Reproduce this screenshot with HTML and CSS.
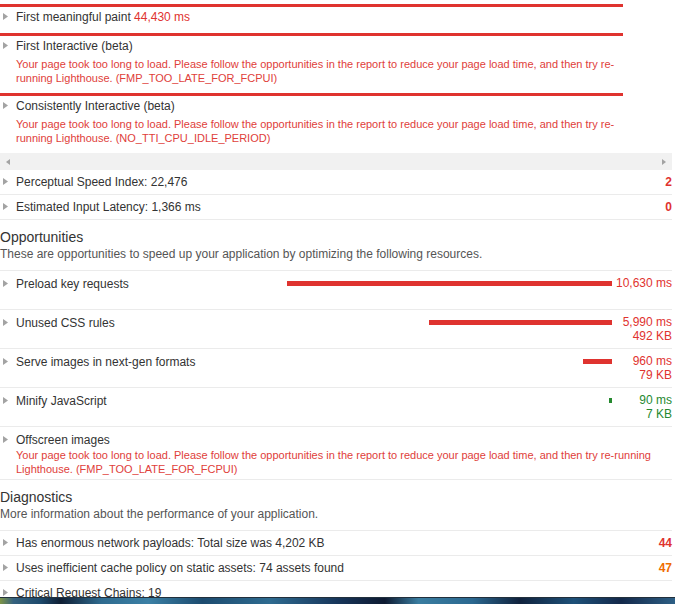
FILE: index.html
```html
<!DOCTYPE html>
<html lang="en">
<head>
<meta charset="utf-8">
<title>Lighthouse report</title>
<link rel="stylesheet" href="styles.css">
</head>
<body>
<div class="report">
  <div class="metrics">
    <div class="metric">
      <div class="title"><span class="tri"><svg width="5" height="7" viewBox="0 0 5 7"><polygon points="0,0 5,3.5 0,7" fill="#a3a3a3"/></svg></span>First meaningful paint&nbsp;<span class="red">44,430 ms</span></div>
    </div>
    <div class="metric">
      <div class="title"><span class="tri"><svg width="5" height="7" viewBox="0 0 5 7"><polygon points="0,0 5,3.5 0,7" fill="#a3a3a3"/></svg></span>First Interactive (beta)</div>
      <div class="desc">Your page took too long to load. Please follow the opportunities in the report to reduce your page load time, and then try re-running Lighthouse. (FMP_TOO_LATE_FOR_FCPUI)</div>
    </div>
    <div class="metric">
      <div class="title"><span class="tri"><svg width="5" height="7" viewBox="0 0 5 7"><polygon points="0,0 5,3.5 0,7" fill="#a3a3a3"/></svg></span>Consistently Interactive (beta)</div>
      <div class="desc">Your page took too long to load. Please follow the opportunities in the report to reduce your page load time, and then try re-running Lighthouse. (NO_TTI_CPU_IDLE_PERIOD)</div>
    </div>
  </div>

  <div class="hscroll">
    <svg width="4" height="6" viewBox="0 0 4 6"><polygon points="4,0 0,3 4,6" fill="#a3a3a3"/></svg>
    <svg width="4" height="6" viewBox="0 0 4 6"><polygon points="0,0 4,3 0,6" fill="#a3a3a3"/></svg>
  </div>

  <div class="audit">
    <div class="title"><span class="tri"><svg width="5" height="7" viewBox="0 0 5 7"><polygon points="0,0 5,3.5 0,7" fill="#a3a3a3"/></svg></span>Perceptual Speed Index: 22,476</div>
    <div class="score red">2</div>
  </div>
  <div class="audit">
    <div class="title"><span class="tri"><svg width="5" height="7" viewBox="0 0 5 7"><polygon points="0,0 5,3.5 0,7" fill="#a3a3a3"/></svg></span>Estimated Input Latency: 1,366 ms</div>
    <div class="score red">0</div>
  </div>

  <div class="group-head">
    <h2>Opportunities</h2>
    <p>These are opportunities to speed up your application by optimizing the following resources.</p>
  </div>

  <div class="opp">
    <div class="title"><span class="tri"><svg width="5" height="7" viewBox="0 0 5 7"><polygon points="0,0 5,3.5 0,7" fill="#a3a3a3"/></svg></span>Preload key requests</div>
    <div class="bar-area"><div class="bar red-bg" style="width:325px"></div></div>
    <div class="vals red"><div>10,630 ms</div></div>
  </div>
  <div class="opp">
    <div class="title"><span class="tri"><svg width="5" height="7" viewBox="0 0 5 7"><polygon points="0,0 5,3.5 0,7" fill="#a3a3a3"/></svg></span>Unused CSS rules</div>
    <div class="bar-area"><div class="bar red-bg" style="width:183px"></div></div>
    <div class="vals red"><div>5,990 ms</div><div>492 KB</div></div>
  </div>
  <div class="opp">
    <div class="title"><span class="tri"><svg width="5" height="7" viewBox="0 0 5 7"><polygon points="0,0 5,3.5 0,7" fill="#a3a3a3"/></svg></span>Serve images in next-gen formats</div>
    <div class="bar-area"><div class="bar red-bg" style="width:29px"></div></div>
    <div class="vals red"><div>960 ms</div><div>79 KB</div></div>
  </div>
  <div class="opp">
    <div class="title"><span class="tri"><svg width="5" height="7" viewBox="0 0 5 7"><polygon points="0,0 5,3.5 0,7" fill="#a3a3a3"/></svg></span>Minify JavaScript</div>
    <div class="bar-area"><div class="bar green-bg" style="width:3px"></div></div>
    <div class="vals green"><div>90 ms</div><div>7 KB</div></div>
  </div>
  <div class="opp opp-error">
    <div class="opp-main">
      <div class="title"><span class="tri"><svg width="5" height="7" viewBox="0 0 5 7"><polygon points="0,0 5,3.5 0,7" fill="#a3a3a3"/></svg></span>Offscreen images</div>
      <div class="desc">Your page took too long to load. Please follow the opportunities in the report to reduce your page load time, and then try re-running Lighthouse. (FMP_TOO_LATE_FOR_FCPUI)</div>
    </div>
  </div>

  <div class="group-head">
    <h2>Diagnostics</h2>
    <p>More information about the performance of your application.</p>
  </div>

  <div class="audit">
    <div class="title"><span class="tri"><svg width="5" height="7" viewBox="0 0 5 7"><polygon points="0,0 5,3.5 0,7" fill="#a3a3a3"/></svg></span>Has enormous network payloads: Total size was 4,202 KB</div>
    <div class="score red">44</div>
  </div>
  <div class="audit">
    <div class="title"><span class="tri"><svg width="5" height="7" viewBox="0 0 5 7"><polygon points="0,0 5,3.5 0,7" fill="#a3a3a3"/></svg></span>Uses inefficient cache policy on static assets: 74 assets found</div>
    <div class="score orange">47</div>
  </div>
  <div class="audit">
    <div class="title"><span class="tri"><svg width="5" height="7" viewBox="0 0 5 7"><polygon points="0,0 5,3.5 0,7" fill="#a3a3a3"/></svg></span>Critical Request Chains: 19</div>
  </div>
</div>
<div class="taskbar"></div>
</body>
</html>
```

FILE: styles.css
```css
html, body {
  margin: 0;
  padding: 0;
  background: #fff;
  overflow: hidden;
}
body {
  font-family: "Liberation Sans", Arial, sans-serif;
  font-size: 12px;
  color: #333;
  line-height: 16px;
}
.report {
  width: 672px;
  padding-top: 4px;
}
.red { color: #df332f; }
.green { color: #26892f; }
.orange { color: #ef6c00; }
.red-bg { background: #df332f; }
.green-bg { background: #26892f; }

.title {
  display: flex;
  align-items: center;
  line-height: 16px;
  white-space: nowrap;
}
.tri {
  width: 16px;
  flex: 0 0 16px;
  display: flex;
  align-items: center;
  padding-left: 3px;
  box-sizing: border-box;
  margin-top: -1px;
}
.tri svg { display: block; }

.metrics { width: 623px; }
.metric {
  border-top: 3px solid #df332f;
  padding: 2px 0 8px;
}
.desc {
  color: #e0403a;
  font-size: 11px;
  line-height: 14px;
  padding-left: 16px;
}
.metric .desc { margin-top: 3px; }

.hscroll {
  height: 17px;
  background: #f1f1f1;
  display: flex;
  align-items: center;
  justify-content: space-between;
  padding: 0 6px;
}
.hscroll svg { display: block; }

.audit {
  display: flex;
  align-items: center;
  padding: 4px 0;
  border-bottom: 1px solid #ebebeb;
}
.audit .title { flex: 1; }
.score {
  font-weight: bold;
  text-align: right;
}

.group-head {
  padding: 8px 0;
  border-bottom: 1px solid #ebebeb;
}
.group-head h2 {
  margin: 0;
  font-size: 14px;
  font-weight: normal;
  line-height: 18px;
  color: #333;
}
.group-head p {
  margin: 0;
  color: #555;
  line-height: 16px;
}

.opp {
  display: flex;
  align-items: flex-start;
  padding: 5px 0;
  border-bottom: 1px solid #ebebeb;
}
.opp .title { flex: 1; }
.bar-area {
  width: 325px;
  display: flex;
  justify-content: flex-end;
  margin-top: 5px;
}
.bar { height: 5px; }
.vals {
  width: 60px;
  text-align: right;
  line-height: 14px;
  min-height: 28px;
}
.opp-error { padding-bottom: 3px; }
.opp-main { flex: 1; }

.taskbar {
  position: fixed;
  left: 0;
  right: 0;
  bottom: 0;
  height: 6px;
  border-top: 1px solid #22303c;
  background: linear-gradient(90deg, #7d9446 0, #35617e 2%, #1d4a6c 6%, #0f1e33 9%, #2f6b8f 15%, #3b80a5 22%, #1c4b6f 30%, #2e6b90 40%, #17355a 50%, #0e1a31 57%, #3a7da0 62%, #2b6890 70%, #10223d 77%, #1e5179 85%, #13284a 92%, #2d5f85 100%);
}
```
